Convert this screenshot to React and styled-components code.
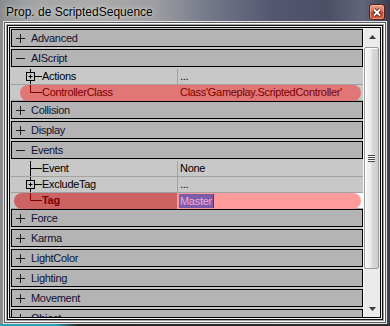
import React from "react";
import styled, { createGlobalStyle } from "styled-components";

const GlobalStyle = createGlobalStyle`
  html, body {
    margin: 0;
    padding: 0;
    background: #2a2a2a;
  }
  body {
    font-family: "Liberation Sans", Arial, sans-serif;
  }
  * {
    box-sizing: border-box;
  }
`;

const Window = styled.div`
  width: 390px;
  height: 326px;
  display: flex;
  flex-direction: column;
  overflow: hidden;
`;

const Chrome = styled.div`
  height: 324px;
  display: flex;
  flex-direction: column;
  padding: 0 3px;
  background: linear-gradient(
    90deg,
    #8a8b8d 0%,
    #a3a4a6 8%,
    #ababab 25%,
    #9c9da1 40%,
    #717587 55%,
    #535870 70%,
    #4b5067 84%,
    #61667a 93%,
    #3a3e50 100%
  );
`;

const TitleBar = styled.div`
  height: 21px;
  display: flex;
  align-items: flex-start;
  justify-content: space-between;
  padding: 0 2px 0 3px;
`;

const Title = styled.span`
  padding-top: 5px;
  font-size: 12px;
  line-height: 14px;
  color: #000;
  text-shadow: 0 0 6px rgba(235, 235, 235, 0.9), 0 0 2px rgba(235, 235, 235, 0.7);
`;

const CloseButton = styled.div`
  margin-top: 4px;
  width: 16px;
  height: 16px;
  border: 1px solid #5e2014;
  border-radius: 3px;
  display: flex;
  align-items: center;
  justify-content: center;
  background: linear-gradient(180deg, #eba38e 0%, #d66c50 45%, #c2412a 55%, #d0613f 100%);
  box-shadow: inset 0 0 0 1px rgba(255, 210, 190, 0.45);
`;

const ClientFrame = styled.div`
  height: 303px;
  padding: 7px;
  display: flex;
  background: #c8c8c8;
  box-shadow:
    inset 0 0 0 1px #e2e2e2,
    inset 0 0 0 2px #5c5c5c,
    inset 0 0 0 3px #fbfbfb,
    inset 0 0 0 4px #a4a4a4,
    inset 0 0 0 5px #101010,
    inset 0 0 0 6px #f2f2f2,
    inset 0 0 0 7px #000;
`;

const Panel = styled.div`
  flex: 1;
  min-width: 0;
  overflow: hidden;
  padding: 1px 0 0 1px;
  background: #c8c8c8;
  font-size: 11px;
  letter-spacing: -0.3px;
`;

const Category = styled.div`
  height: 18px;
  margin-bottom: 2px;
  border: 1px solid #000;
  background: #b4b4b4;
  display: flex;
  align-items: center;
  padding-left: 4px;
  color: #111133;
  white-space: nowrap;
`;

const Sign = styled.svg`
  flex-shrink: 0;
  margin-right: 6px;
`;

const PropRow = styled.div`
  position: relative;
  height: 16px;
  display: flex;
  border-bottom: 1px solid #a2a2a2;
  color: ${(p) => (p.$hl ? "#7c0000" : "#000")};
  background: ${(p) =>
    p.$hl === "edit" ? "linear-gradient(90deg, transparent 167px, #fff 167px)" : "none"};

  ${(p) =>
    p.$hl &&
    `
    &::before {
      content: "";
      position: absolute;
      top: 0;
      bottom: -1px;
      left: ${p.$hl === "edit" ? 3 : 9}px;
      right: 2px;
      border-radius: 8px;
      background: ${
        p.$hl === "edit"
          ? "linear-gradient(90deg, #cd6262 0 163px, #ff9b9b 163px)"
          : "#e07676"
      };
    }
  `}
`;

const NameCell = styled.div`
  position: relative;
  width: 167px;
  flex-shrink: 0;
  display: flex;
  align-items: flex-start;
  border-right: 1px solid ${(p) => (p.$hl ? "transparent" : "#a2a2a2")};
  white-space: nowrap;
  overflow: hidden;
`;

const Tree = styled.svg`
  flex-shrink: 0;
  overflow: visible;
`;

const NameText = styled.span`
  line-height: 15px;
  font-weight: ${(p) => (p.$bold ? 700 : 400)};
`;

const ValueCell = styled.div`
  position: relative;
  flex: 1;
  min-width: 0;
  padding-left: 2px;
  line-height: 15px;
  white-space: nowrap;
  overflow: hidden;
`;

const Selection = styled.span`
  display: inline-block;
  margin-left: -1px;
  padding: 0 1px;
  line-height: 14px;
  margin-top: 1px;
  background: #7c5ca8;
  color: #f6a8d6;
  border-right: 1px solid #e80000;
`;

const Scrollbar = styled.div`
  width: 17px;
  flex-shrink: 0;
  display: flex;
  flex-direction: column;
  background: #ebebeb;
  border-left: 1px solid #f8f8f8;
`;

const ArrowButton = styled.div`
  height: 17px;
  display: flex;
  align-items: center;
  justify-content: center;
`;

const Track = styled.div`
  flex: 1;
  padding: 2px 1px 0 0;
`;

const Thumb = styled.div`
  height: 222px;
  border: 1px solid #9c9c9c;
  border-radius: 2px;
  display: flex;
  align-items: center;
  justify-content: center;
  background: linear-gradient(90deg, #f7f7f7 0%, #ececec 45%, #dadada 55%, #cdcdcd 100%);
  box-shadow: inset 1px 1px 0 #fff;
`;

const Grip = styled.div`
  width: 7px;
  height: 7px;
  background: repeating-linear-gradient(180deg, #4a4a4a 0 1px, #f4f4f4 1px 2px);
`;

const DesktopStrip = styled.div`
  height: 2px;
  background: linear-gradient(90deg, #2f9fb8 0%, #2f9fb8 14%, #262626 20%, #2e2e2e 100%);
`;

const sections = [
  { name: "Advanced" },
  {
    name: "AIScript",
    open: true,
    props: [
      { name: "Actions", value: "...", expandable: true },
      { name: "ControllerClass", value: "Class'Gameplay.ScriptedController'", hl: "soft" },
    ],
  },
  { name: "Collision" },
  { name: "Display" },
  {
    name: "Events",
    open: true,
    props: [
      { name: "Event", value: "None" },
      { name: "ExcludeTag", value: "...", expandable: true },
      { name: "Tag", value: "Master", hl: "edit" },
    ],
  },
  { name: "Force" },
  { name: "Karma" },
  { name: "LightColor" },
  { name: "Lighting" },
  { name: "Movement" },
  { name: "Object" },
];

const PlusMinus = ({ open }) => (
  <Sign width="9" height="9" viewBox="0 0 9 9">
    <path d="M0 4.5H9" stroke="#1c1c1c" strokeWidth="1" />
    {!open && <path d="M4.5 0V9" stroke="#1c1c1c" strokeWidth="1" />}
  </Sign>
);

const TreeLines = ({ expandable, last }) => {
  const end = last ? 7.5 : 16;
  return (
    <Tree width="31" height="16" viewBox="0 0 31 16">
      <g stroke="currentColor" strokeWidth="1" fill="none">
        {expandable ? (
          <>
            <path d={`M19.5 0V3.5M19.5 11.5V${end}M23.5 7.5H31`} />
            <rect x="15.5" y="3.5" width="8" height="8" fill="none" />
            <path d="M17.5 7.5H21.5M19.5 5.5V9.5" />
          </>
        ) : (
          <path d={`M19.5 0V${end}M19.5 7.5H31`} />
        )}
      </g>
    </Tree>
  );
};

const Property = ({ prop, last }) => (
  <PropRow $hl={prop.hl}>
    <NameCell $hl={prop.hl}>
      <TreeLines expandable={prop.expandable} last={last} />
      <NameText $bold={prop.hl === "edit"}>{prop.name}</NameText>
    </NameCell>
    <ValueCell>
      {prop.hl === "edit" ? <Selection>{prop.value}</Selection> : prop.value}
    </ValueCell>
  </PropRow>
);

export default function App() {
  return (
    <>
      <GlobalStyle />
      <Window>
        <Chrome>
          <TitleBar>
            <Title>Prop. de ScriptedSequence</Title>
            <CloseButton>
              <svg width="10" height="9" viewBox="0 0 10 9">
                <path d="M2 1.5L8 7.5M8 1.5L2 7.5" stroke="#4a1a10" strokeWidth="3.4" />
                <path d="M2 1.5L8 7.5M8 1.5L2 7.5" stroke="#fff" strokeWidth="1.8" />
              </svg>
            </CloseButton>
          </TitleBar>
          <ClientFrame>
            <Panel>
              {sections.map((s) => (
                <React.Fragment key={s.name}>
                  <Category>
                    <PlusMinus open={s.open} />
                    {s.name}
                  </Category>
                  {s.open &&
                    s.props.map((p, i) => (
                      <Property key={p.name} prop={p} last={i === s.props.length - 1} />
                    ))}
                </React.Fragment>
              ))}
            </Panel>
            <Scrollbar>
              <ArrowButton>
                <svg width="7" height="4" viewBox="0 0 7 4">
                  <path d="M3.5 0L7 4H0z" fill="#3a3a3a" />
                </svg>
              </ArrowButton>
              <Track>
                <Thumb>
                  <Grip />
                </Thumb>
              </Track>
              <ArrowButton>
                <svg width="7" height="4" viewBox="0 0 7 4">
                  <path d="M0 0H7L3.5 4z" fill="#3a3a3a" />
                </svg>
              </ArrowButton>
            </Scrollbar>
          </ClientFrame>
        </Chrome>
        <DesktopStrip />
      </Window>
    </>
  );
}
